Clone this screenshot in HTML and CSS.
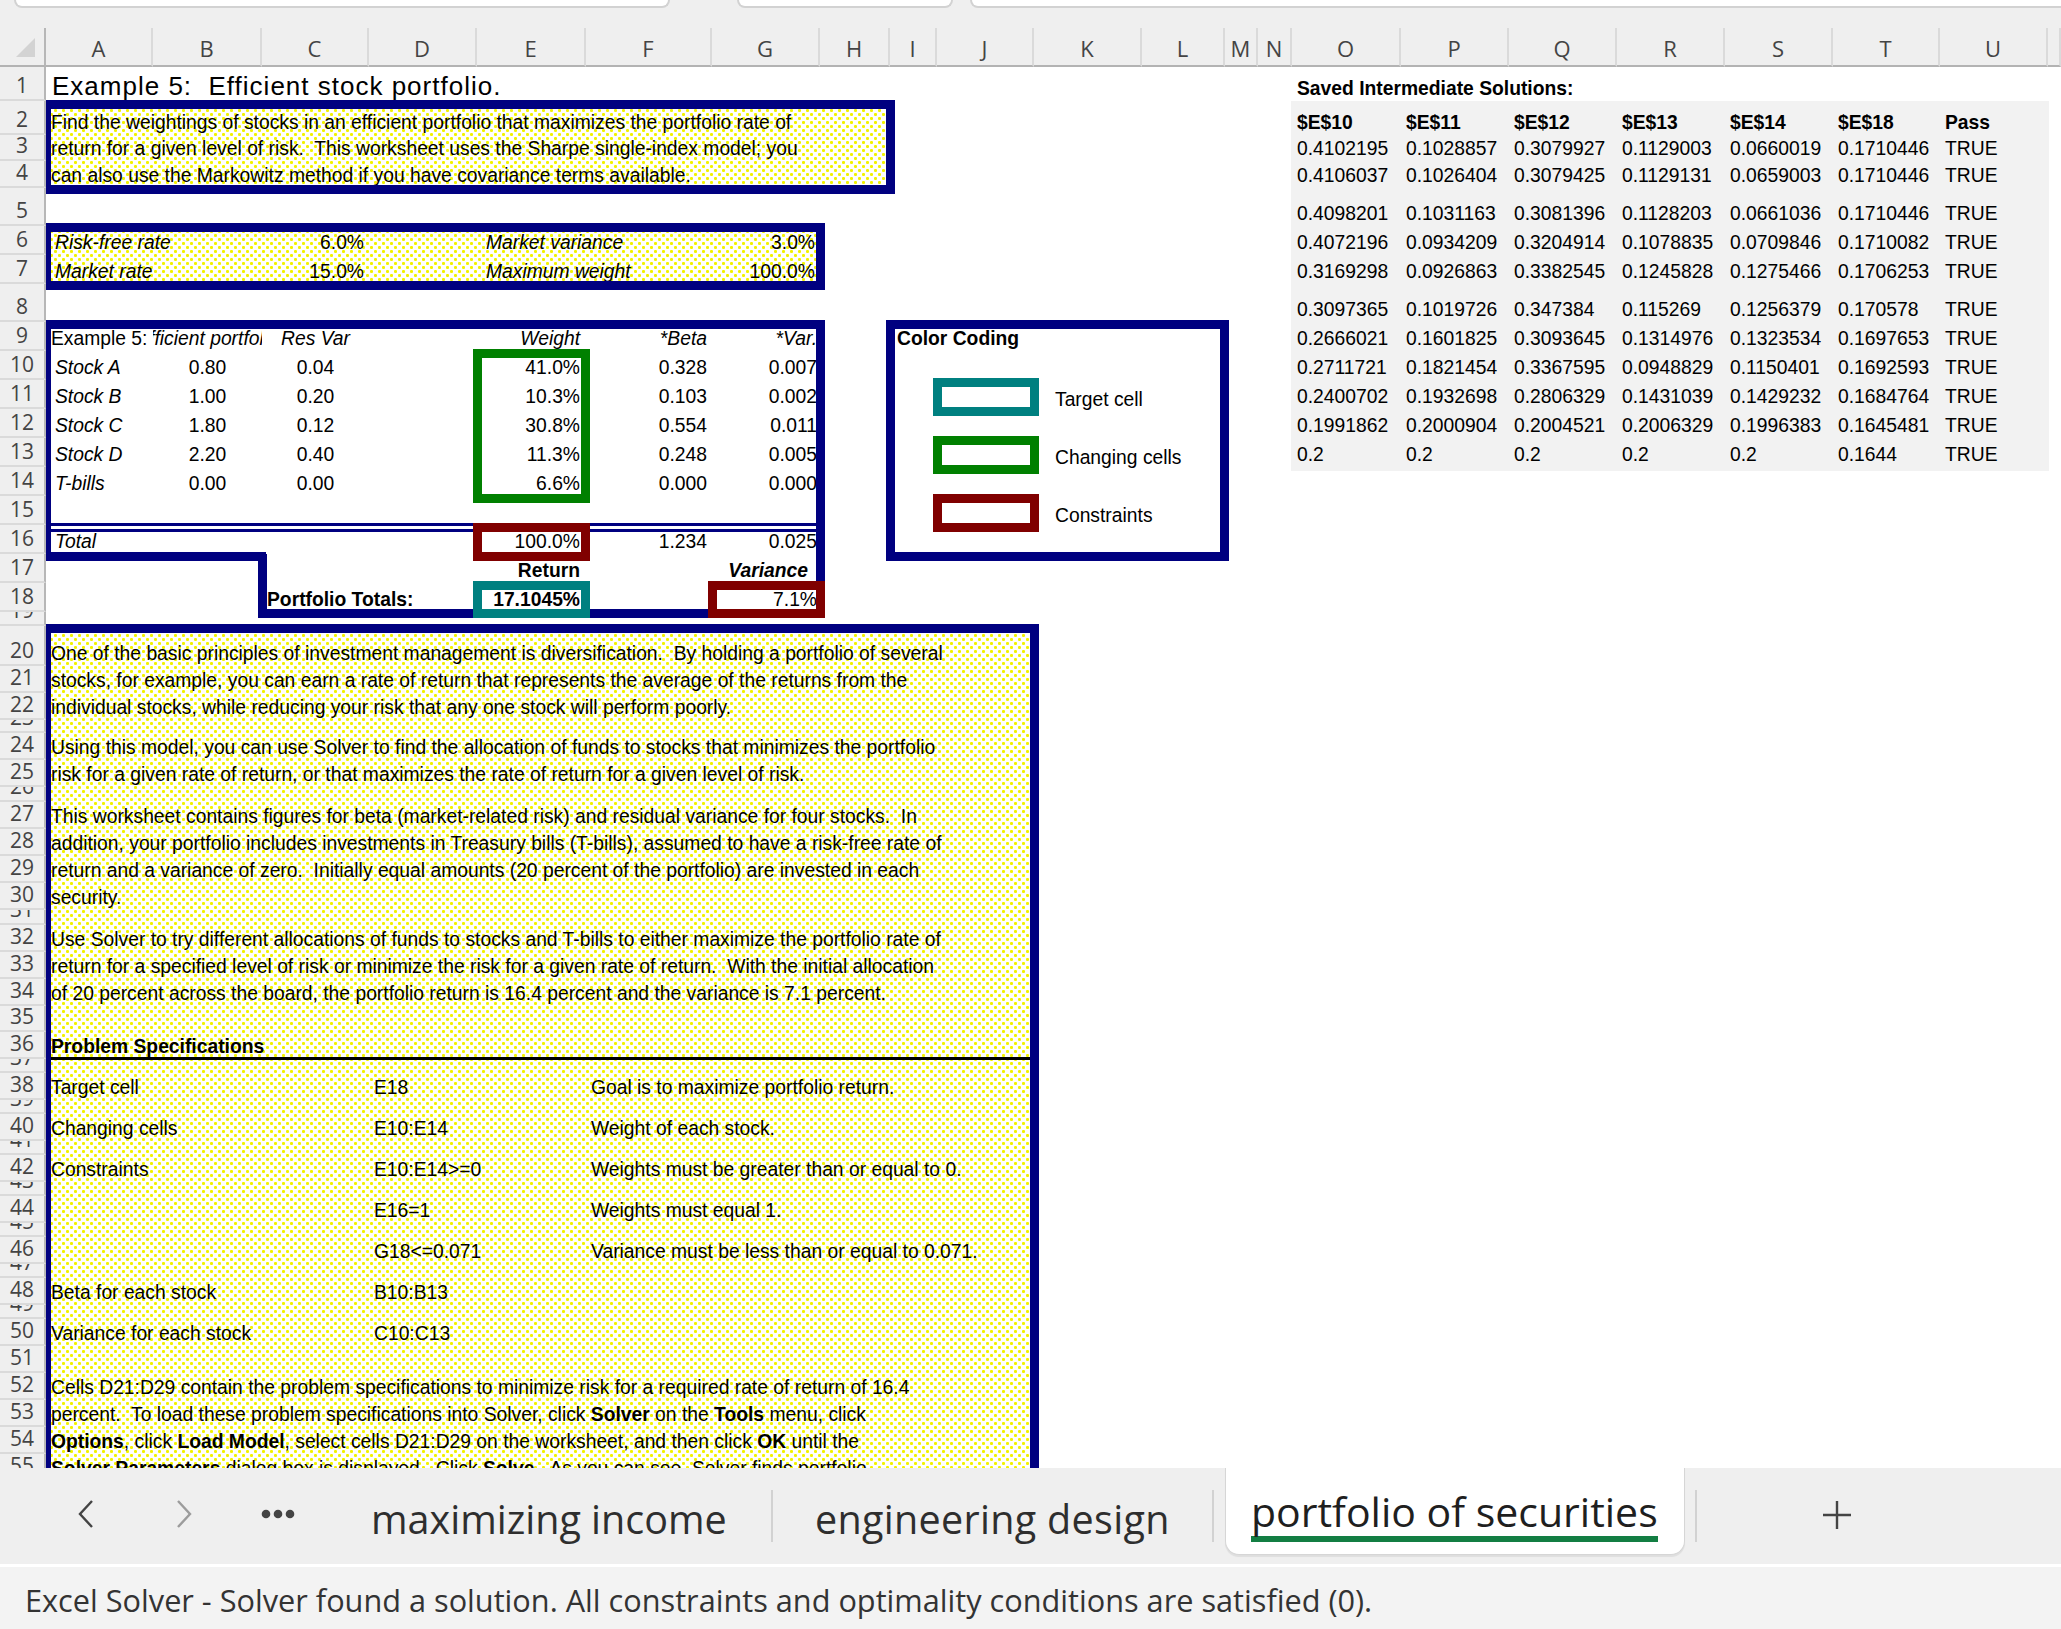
FILE: index.html
```html
<!DOCTYPE html>
<html lang="en">
<head>
<meta charset="utf-8">
<title>portfolio of securities</title>
<link rel="stylesheet" href="styles.css">
</head>
<body>
<div class="sheet">
  <!-- header row -->
  <div class="hdrbg"></div>
  <div class="ribbon"><span class="rb rb1"></span><span class="rb rb2"></span><span class="rb rb3"></span></div>
  <div class="corner"><svg width="19" height="19" viewBox="0 0 19 19"><path d="M19 0V19H0Z" fill="#d3d3d3"/></svg></div>
  <div class="ch cA">A</div><div class="ch cB">B</div><div class="ch cC">C</div><div class="ch cD">D</div>
  <div class="ch cE">E</div><div class="ch cF">F</div><div class="ch cG">G</div><div class="ch cH">H</div>
  <div class="ch cI">I</div><div class="ch cJ">J</div><div class="ch cK">K</div><div class="ch cL">L</div>
  <div class="ch cM">M</div><div class="ch cN">N</div><div class="ch cO">O</div><div class="ch cP">P</div>
  <div class="ch cQ">Q</div><div class="ch cR">R</div><div class="ch cS">S</div><div class="ch cT">T</div>
  <div class="ch cU">U</div><div class="ch cV"></div>

  <!-- fills -->
  <div class="fill dots f1"></div>
  <div class="fill dots f2"></div>
  <div class="fill dots f4"></div>
  <div class="fill panel"></div>

  <!-- row 1 -->
  <div class="c r1 cA title">Example 5:  Efficient stock portfolio.</div>
  <div class="c r1 cO b">Saved Intermediate Solutions:</div>

  <!-- rows 2-4 -->
  <div class="c r2 cA">Find the weightings of stocks in an efficient portfolio that maximizes the portfolio rate of</div>
  <div class="c r3 cA">return for a given level of risk.  This worksheet uses the Sharpe single-index model; you</div>
  <div class="c r4 cA">can also use the Markowitz method if you have covariance terms available.</div>

  <!-- right panel -->
  <div class="c r2 cO b">$E$10</div><div class="c r2 cP b">$E$11</div><div class="c r2 cQ b">$E$12</div><div class="c r2 cR b">$E$13</div><div class="c r2 cS b">$E$14</div><div class="c r2 cT b">$E$18</div><div class="c r2 cU b">Pass</div>
  <div class="c r3 cO">0.4102195</div><div class="c r3 cP">0.1028857</div><div class="c r3 cQ">0.3079927</div><div class="c r3 cR">0.1129003</div><div class="c r3 cS">0.0660019</div><div class="c r3 cT">0.1710446</div><div class="c r3 cU">TRUE</div>
  <div class="c r4 cO">0.4106037</div><div class="c r4 cP">0.1026404</div><div class="c r4 cQ">0.3079425</div><div class="c r4 cR">0.1129131</div><div class="c r4 cS">0.0659003</div><div class="c r4 cT">0.1710446</div><div class="c r4 cU">TRUE</div>
  <div class="c r5 cO">0.4098201</div><div class="c r5 cP">0.1031163</div><div class="c r5 cQ">0.3081396</div><div class="c r5 cR">0.1128203</div><div class="c r5 cS">0.0661036</div><div class="c r5 cT">0.1710446</div><div class="c r5 cU">TRUE</div>
  <div class="c r6 cO">0.4072196</div><div class="c r6 cP">0.0934209</div><div class="c r6 cQ">0.3204914</div><div class="c r6 cR">0.1078835</div><div class="c r6 cS">0.0709846</div><div class="c r6 cT">0.1710082</div><div class="c r6 cU">TRUE</div>
  <div class="c r7 cO">0.3169298</div><div class="c r7 cP">0.0926863</div><div class="c r7 cQ">0.3382545</div><div class="c r7 cR">0.1245828</div><div class="c r7 cS">0.1275466</div><div class="c r7 cT">0.1706253</div><div class="c r7 cU">TRUE</div>
  <div class="c r8 cO">0.3097365</div><div class="c r8 cP">0.1019726</div><div class="c r8 cQ">0.347384</div><div class="c r8 cR">0.115269</div><div class="c r8 cS">0.1256379</div><div class="c r8 cT">0.170578</div><div class="c r8 cU">TRUE</div>
  <div class="c r9 cO">0.2666021</div><div class="c r9 cP">0.1601825</div><div class="c r9 cQ">0.3093645</div><div class="c r9 cR">0.1314976</div><div class="c r9 cS">0.1323534</div><div class="c r9 cT">0.1697653</div><div class="c r9 cU">TRUE</div>
  <div class="c r10 cO">0.2711721</div><div class="c r10 cP">0.1821454</div><div class="c r10 cQ">0.3367595</div><div class="c r10 cR">0.0948829</div><div class="c r10 cS">0.1150401</div><div class="c r10 cT">0.1692593</div><div class="c r10 cU">TRUE</div>
  <div class="c r11 cO">0.2400702</div><div class="c r11 cP">0.1932698</div><div class="c r11 cQ">0.2806329</div><div class="c r11 cR">0.1431039</div><div class="c r11 cS">0.1429232</div><div class="c r11 cT">0.1684764</div><div class="c r11 cU">TRUE</div>
  <div class="c r12 cO">0.1991862</div><div class="c r12 cP">0.2000904</div><div class="c r12 cQ">0.2004521</div><div class="c r12 cR">0.2006329</div><div class="c r12 cS">0.1996383</div><div class="c r12 cT">0.1645481</div><div class="c r12 cU">TRUE</div>
  <div class="c r13 cO">0.2</div><div class="c r13 cP">0.2</div><div class="c r13 cQ">0.2</div><div class="c r13 cR">0.2</div><div class="c r13 cS">0.2</div><div class="c r13 cT">0.1644</div><div class="c r13 cU">TRUE</div>

  <!-- rows 6-7 -->
  <div class="c r6 cA i ind">Risk-free rate</div><div class="c r6 cC rt">6.0%</div>
  <div class="c r6 cE i ind">Market variance</div><div class="c r6 cG rt">3.0%</div>
  <div class="c r7 cA i ind">Market rate</div><div class="c r7 cC rt">15.0%</div>
  <div class="c r7 cE i ind">Maximum weight</div><div class="c r7 cG rt">100.0%</div>

  <!-- rows 9-18 -->
  <div class="c r9 cA clip">Example 5: Efficient portfolio</div>
  <div class="c r9 cB i ct clip">Efficient portfolio</div>
  <div class="c r9 cC i ct">Res Var</div>
  <div class="c r9 cE i rt pe">Weight</div>
  <div class="c r9 cF i rt">*Beta</div>
  <div class="c r9 cG i rt pg">*Var.</div>

  <div class="c r10 cA i ind">Stock A</div><div class="c r10 cB ct">0.80</div><div class="c r10 cC ct">0.04</div><div class="c r10 cE rt pe">41.0%</div><div class="c r10 cF rt">0.328</div><div class="c r10 cG rt pg">0.007</div>
  <div class="c r11 cA i ind">Stock B</div><div class="c r11 cB ct">1.00</div><div class="c r11 cC ct">0.20</div><div class="c r11 cE rt pe">10.3%</div><div class="c r11 cF rt">0.103</div><div class="c r11 cG rt pg">0.002</div>
  <div class="c r12 cA i ind">Stock C</div><div class="c r12 cB ct">1.80</div><div class="c r12 cC ct">0.12</div><div class="c r12 cE rt pe">30.8%</div><div class="c r12 cF rt">0.554</div><div class="c r12 cG rt pg">0.011</div>
  <div class="c r13 cA i ind">Stock D</div><div class="c r13 cB ct">2.20</div><div class="c r13 cC ct">0.40</div><div class="c r13 cE rt pe">11.3%</div><div class="c r13 cF rt">0.248</div><div class="c r13 cG rt pg">0.005</div>
  <div class="c r14 cA i ind">T-bills</div><div class="c r14 cB ct">0.00</div><div class="c r14 cC ct">0.00</div><div class="c r14 cE rt pe">6.6%</div><div class="c r14 cF rt">0.000</div><div class="c r14 cG rt pg">0.000</div>

  <div class="c r16 cA i ind">Total</div><div class="c r16 cE rt pe">100.0%</div><div class="c r16 cF rt">1.234</div><div class="c r16 cG rt pg">0.025</div>
  <div class="c r17 cE rt b pe">Return</div><div class="c r17 cG rt b i pv">Variance</div>
  <div class="c r18 cC b">Portfolio Totals:</div><div class="c r18 cE rt b pe">17.1045%</div><div class="c r18 cG rt pg">7.1%</div>

  <!-- colour coding -->
  <div class="c r9 cI b cc">Color Coding</div>
  <div class="c r11 cK lg">Target cell</div>
  <div class="c r13 cK lg">Changing cells</div>
  <div class="c r15 cK lg">Constraints</div>

  <!-- big text box -->
  <div class="c r20 cA">One of the basic principles of investment management is diversification.  By holding a portfolio of several</div>
  <div class="c r21 cA">stocks, for example, you can earn a rate of return that represents the average of the returns from the</div>
  <div class="c r22 cA">individual stocks, while reducing your risk that any one stock will perform poorly.</div>
  <div class="c r24 cA">Using this model, you can use Solver to find the allocation of funds to stocks that minimizes the portfolio</div>
  <div class="c r25 cA">risk for a given rate of return, or that maximizes the rate of return for a given level of risk.</div>
  <div class="c r27 cA">This worksheet contains figures for beta (market-related risk) and residual variance for four stocks.  In</div>
  <div class="c r28 cA">addition, your portfolio includes investments in Treasury bills (T-bills), assumed to have a risk-free rate of</div>
  <div class="c r29 cA">return and a variance of zero.  Initially equal amounts (20 percent of the portfolio) are invested in each</div>
  <div class="c r30 cA">security.</div>
  <div class="c r32 cA">Use Solver to try different allocations of funds to stocks and T-bills to either maximize the portfolio rate of</div>
  <div class="c r33 cA">return for a specified level of risk or minimize the risk for a given rate of return.  With the initial allocation</div>
  <div class="c r34 cA">of 20 percent across the board, the portfolio return is 16.4 percent and the variance is 7.1 percent.</div>
  <div class="c r36 cA b">Problem Specifications</div>

  <div class="c r38 cA">Target cell</div><div class="c r38 cD">E18</div><div class="c r38 cF">Goal is to maximize portfolio return.</div>
  <div class="c r40 cA">Changing cells</div><div class="c r40 cD">E10:E14</div><div class="c r40 cF">Weight of each stock.</div>
  <div class="c r42 cA">Constraints</div><div class="c r42 cD">E10:E14&gt;=0</div><div class="c r42 cF">Weights must be greater than or equal to 0.</div>
  <div class="c r44 cD">E16=1</div><div class="c r44 cF">Weights must equal 1.</div>
  <div class="c r46 cD">G18&lt;=0.071</div><div class="c r46 cF">Variance must be less than or equal to 0.071.</div>
  <div class="c r48 cA">Beta for each stock</div><div class="c r48 cD">B10:B13</div>
  <div class="c r50 cA">Variance for each stock</div><div class="c r50 cD">C10:C13</div>

  <div class="c r52 cA">Cells D21:D29 contain the problem specifications to minimize risk for a required rate of return of 16.4</div>
  <div class="c r53 cA"><span>percent.  To load these problem specifications into Solver, click <b>Solver</b> on the <b>Tools</b> menu, click</span></div>
  <div class="c r54 cA"><span><b>Options</b>, click <b>Load Model</b>, select cells D21:D29 on the worksheet, and then click <b>OK</b> until the</span></div>
  <div class="c r55 cA"><span><b>Solver Parameters</b> dialog box is displayed.  Click <b>Solve</b>.  As you can see, Solver finds portfolio</span></div>

  <!-- frames -->
  <div class="fr fr1"></div>
  <div class="fr fr2"></div>
  <div class="fr fr3a"></div>
  <div class="fr fr3b"></div>
  <div class="fr fr3c"></div>
  <div class="dbl"></div>
  <div class="hr36"></div>
  <div class="fr fr4"></div>
  <div class="fr frcc"></div>
  <div class="fr frg"></div>
  <div class="fr frr1"></div>
  <div class="fr frt"></div>
  <div class="fr frr2"></div>
  <div class="fr sw sw1"></div>
  <div class="fr sw sw2"></div>
  <div class="fr sw sw3"></div>

  <!-- row numbers -->
  <div class="rn r1">1</div><div class="rn r2">2</div><div class="rn r3">3</div><div class="rn r4">4</div><div class="rn r5">5</div>
  <div class="rn r6">6</div><div class="rn r7">7</div><div class="rn r8">8</div><div class="rn r9">9</div><div class="rn r10">10</div>
  <div class="rn r11">11</div><div class="rn r12">12</div><div class="rn r13">13</div><div class="rn r14">14</div><div class="rn r15">15</div>
  <div class="rn r16">16</div><div class="rn r17">17</div><div class="rn r18">18</div><div class="rn r19">19</div><div class="rn r20">20</div>
  <div class="rn r21">21</div><div class="rn r22">22</div><div class="rn r23">23</div><div class="rn r24">24</div><div class="rn r25">25</div>
  <div class="rn r26">26</div><div class="rn r27">27</div><div class="rn r28">28</div><div class="rn r29">29</div><div class="rn r30">30</div>
  <div class="rn r31">31</div><div class="rn r32">32</div><div class="rn r33">33</div><div class="rn r34">34</div><div class="rn r35">35</div>
  <div class="rn r36">36</div><div class="rn r37">37</div><div class="rn r38">38</div><div class="rn r39">39</div><div class="rn r40">40</div>
  <div class="rn r41">41</div><div class="rn r42">42</div><div class="rn r43">43</div><div class="rn r44">44</div><div class="rn r45">45</div>
  <div class="rn r46">46</div><div class="rn r47">47</div><div class="rn r48">48</div><div class="rn r49">49</div><div class="rn r50">50</div>
  <div class="rn r51">51</div><div class="rn r52">52</div><div class="rn r53">53</div><div class="rn r54">54</div><div class="rn r55">55</div>
</div>

<div class="tabbar">
  <div class="nav">
    <svg class="chev" width="16" height="28" viewBox="0 0 16 28"><path d="M14 1L2 14L14 27" fill="none" stroke="#444" stroke-width="2.4"/></svg>
    <svg class="chev next" width="16" height="28" viewBox="0 0 16 28"><path d="M2 1L14 14L2 27" fill="none" stroke="#9c9c9c" stroke-width="2.4"/></svg>
    <svg width="34" height="10" viewBox="0 0 34 10"><circle cx="5" cy="5" r="4.3" fill="#444"/><circle cx="17" cy="5" r="4.3" fill="#444"/><circle cx="29" cy="5" r="4.3" fill="#444"/></svg>
  </div>
  <div class="tab t1">maximizing income</div>
  <div class="sep"></div>
  <div class="tab t2">engineering design</div>
  <div class="sep"></div>
  <div class="tab active"><span class="uline">portfolio of securities</span></div>
  <div class="sep s3"></div>
  <div class="plus"><svg width="32" height="32" viewBox="0 0 32 32"><path d="M16 2V30M2 16H30" stroke="#444" stroke-width="2.4"/></svg></div>
</div>
<div class="status">Excel Solver - Solver found a solution. All constraints and optimality conditions are satisfied (0).</div>
</body>
</html>
```
FILE: styles.css
```css
* { box-sizing: border-box; }
html, body { margin: 0; padding: 0; }
body {
  width: 2061px;
  height: 1629px;
  overflow: hidden;
  background: #fff;
  font-family: "Liberation Sans", Arial, sans-serif;
  color: #000;
}

/* ---------- sheet grid ---------- */
.sheet {
  display: grid;
  height: 1468px;
  overflow: hidden;
  grid-template-columns: 46px 107px 109px 107px 108px 109px 126px 108px 70px 47px 97px 108px 83px 33px 34px 109px 108px 108px 108px 108px 107px 108px 13px;
  grid-template-rows:
    67px
    34px 34px 26px 27px 38px 29px 29px 38px
    29px 29px 29px 29px 29px 29px 29px 29px 29px 29px
    14px 40px 27px 27px 13px 27px 27px 15px
    27px 27px 27px 27px 15px
    27px 27px 27px 26px 27px
    14px
    27px 14px 27px 14px 27px 14px 27px 14px 27px 14px 27px 14px
    27px 27px 27px 27px 27px 27px;
}

/* rows: rN -> grid row N+1 */
.r1{grid-row:2}.r2{grid-row:3}.r3{grid-row:4}.r4{grid-row:5}.r5{grid-row:6}
.r6{grid-row:7}.r7{grid-row:8}.r8{grid-row:9}.r9{grid-row:10}.r10{grid-row:11}
.r11{grid-row:12}.r12{grid-row:13}.r13{grid-row:14}.r14{grid-row:15}.r15{grid-row:16}
.r16{grid-row:17}.r17{grid-row:18}.r18{grid-row:19}.r19{grid-row:20}.r20{grid-row:21}
.r21{grid-row:22}.r22{grid-row:23}.r23{grid-row:24}.r24{grid-row:25}.r25{grid-row:26}
.r26{grid-row:27}.r27{grid-row:28}.r28{grid-row:29}.r29{grid-row:30}.r30{grid-row:31}
.r31{grid-row:32}.r32{grid-row:33}.r33{grid-row:34}.r34{grid-row:35}.r35{grid-row:36}
.r36{grid-row:37}.r37{grid-row:38}.r38{grid-row:39}.r39{grid-row:40}.r40{grid-row:41}
.r41{grid-row:42}.r42{grid-row:43}.r43{grid-row:44}.r44{grid-row:45}.r45{grid-row:46}
.r46{grid-row:47}.r47{grid-row:48}.r48{grid-row:49}.r49{grid-row:50}.r50{grid-row:51}
.r51{grid-row:52}.r52{grid-row:53}.r53{grid-row:54}.r54{grid-row:55}.r55{grid-row:56}

/* columns */
.cA{grid-column:2}.cB{grid-column:3}.cC{grid-column:4}.cD{grid-column:5}
.cE{grid-column:6}.cF{grid-column:7}.cG{grid-column:8}.cH{grid-column:9}
.cI{grid-column:10}.cJ{grid-column:11}.cK{grid-column:12}.cL{grid-column:13}
.cM{grid-column:14}.cN{grid-column:15}.cO{grid-column:16}.cP{grid-column:17}
.cQ{grid-column:18}.cR{grid-column:19}.cS{grid-column:20}.cT{grid-column:21}
.cU{grid-column:22}.cV{grid-column:23}

/* ---------- header ---------- */
.hdrbg {
  grid-row: 1;
  grid-column: 1 / -1;
  background: #efefef;
}
.ribbon {
  grid-row: 1;
  grid-column: 1 / -1;
  align-self: start;
  height: 8px;
  display: flex;
  z-index: 1;
}
.rb {
  display: block;
  height: 8px;
  background: #fff;
  border: 2px solid #d2d2d2;
  border-top: 0;
  border-radius: 0 0 11px 11px;
}
.rb1 { margin-left: 14px; width: 656px; }
.rb2 { margin-left: 67px; width: 216px; }
.rb3 { margin-left: 17px; flex: 1; margin-right: -30px; }

.corner {
  grid-row: 1;
  grid-column: 1;
  align-self: end;
  height: 39px;
  border-right: 2px solid #b7b7b7;
  border-bottom: 2px solid #b3b3b3;
  display: flex;
  align-items: flex-end;
  justify-content: flex-end;
  padding: 0 9px 8px 0;
  z-index: 6;
}
.ch {
  grid-row: 1;
  align-self: end;
  height: 39px;
  padding-top: 3px;
  border-bottom: 2px solid #b3b3b3;
  border-right: 2px solid #dadada;
  font-family: "Open Sans", "Noto Sans", sans-serif;
  font-size: 22px;
  line-height: 34px;
  color: #444;
  text-align: center;
  z-index: 1;
}

/* ---------- row numbers ---------- */
.rn {
  grid-column: 1;
  background: #efefef;
  border-right: 2px solid #b7b7b7;
  border-bottom: 2px solid #dadada;
  display: flex;
  align-items: flex-end;
  justify-content: center;
  font-family: "Open Sans", "Noto Sans", sans-serif;
  font-size: 21px;
  line-height: 27px;
  color: #444;
  overflow: hidden;
  z-index: 6;
}

/* ---------- fills ---------- */
.fill { z-index: 0; }
.dots {
  background-color: #fff;
  background-image:
    radial-gradient(circle at 1.5px 1.5px, #f2f200 1.3px, transparent 1.7px),
    radial-gradient(circle at 1.5px 1.5px, #f2f200 1.3px, transparent 1.7px);
  background-size: 8px 8px, 8px 8px;
  background-position: 0 0, 4px 4px;
}
.f1 { grid-row: 3 / 6; grid-column: 2 / 10; }
.f2 { grid-row: 7 / 9; grid-column: 2 / 9; }
.f4 { grid-row: 21 / 57; grid-column: 2 / 12; }
.panel {
  grid-row: 3 / 15;
  grid-column: 16 / 23;
  background: #f2f2f2;
  margin: 0 -1px -4px -1px;
}

/* ---------- cells ---------- */
.c {
  display: flex;
  align-items: flex-end;
  white-space: pre;
  font-size: 19.3px;
  line-height: 20px;
  padding: 0 5px 2px 5px;
  min-width: 0;
  z-index: 1;
}
.c b { font-weight: bold; }
.i { font-style: italic; }
.b { font-weight: bold; }
.rt { justify-content: flex-end; }
.ct { justify-content: center; }
.clip { overflow: hidden; }
.ind { padding-left: 9px; }
.pe { padding-right: 6px; }
.pg { padding-right: 3px; }
.pv { padding-right: 12px; }
.title {
  font-size: 26px;
  letter-spacing: 1px;
  line-height: 28px;
  padding-bottom: 1px;
  padding-left: 6px;
}
.cc { padding-left: 7px; }
.lg { padding-left: 21px; margin-bottom: -3px; }

/* ---------- frames ---------- */
.fr {
  border: 9px solid #000080;
  margin: -2px -5px -7px -4px;
  z-index: 3;
}
.fr1 { grid-row: 3 / 6; grid-column: 2 / 10; margin-top: -1px; margin-bottom: -6px; }
.fr2 { grid-row: 7 / 9; grid-column: 2 / 9; margin-top: -3px; margin-bottom: -6px; }
.fr3a { grid-row: 10 / 18; grid-column: 2 / 9; border-bottom: 0; margin-bottom: 0; }
.fr3b { grid-row: 17; grid-column: 2 / 4; border-width: 0 0 9px 0; margin: 0 -4px -7px -4px; }
.fr3c { grid-row: 18 / 20; grid-column: 4 / 9; border-top: 0; margin-top: 0; margin-bottom: -6px; }
.fr4 { grid-row: 21 / 57; grid-column: 2 / 12; }
.frcc { grid-row: 10 / 18; grid-column: 10 / 14; margin-right: -4px; }
.frg { grid-row: 11 / 16; grid-column: 6; border-color: #008000; margin-right: -4px; }
.frr1 { grid-row: 17; grid-column: 6; border-color: #800000; margin-right: -4px; }
.frt { grid-row: 19; grid-column: 6; border-color: #008080; margin-right: -4px; margin-bottom: -6px; }
.frr2 { grid-row: 19; grid-column: 8; border-color: #800000; margin-bottom: -6px; }
.sw { grid-column: 11; }
.sw1 { grid-row: 12; border-color: #008080; }
.sw2 { grid-row: 14; border-color: #008000; }
.sw3 { grid-row: 16; border-color: #800000; }

.dbl {
  grid-row: 16;
  grid-column: 2 / 9;
  border-bottom: 9px double #000080;
  margin: 0 0 -7px -4px;
  z-index: 2;
}
.hr36 {
  grid-row: 37;
  grid-column: 2 / 12;
  border-bottom: 3px solid #000;
  margin-bottom: -1px;
  z-index: 2;
}

/* ---------- sheet tabs ---------- */
.tabbar {
  height: 96px;
  background: #efefef;
  display: flex;
  align-items: flex-start;
  font-family: "Open Sans", "Noto Sans", sans-serif;
  color: #2e2e2e;
}
.nav {
  width: 371px;
  height: 92px;
  display: flex;
  align-items: center;
  padding-left: 78px;
}
.chev { margin-right: 82px; }
.chev.next { margin-right: 69px; }
.tab {
  font-size: 39.5px;
  line-height: 52px;
  padding-top: 25px;
  white-space: nowrap;
}
.t1 { width: 400px; }
.t2 { width: 439px; padding-left: 42px; letter-spacing: 0.3px; }
.sep {
  width: 2px;
  height: 52px;
  margin-top: 22px;
  background: #d2d2d2;
}
.active {
  width: 460px;
  height: 87px;
  margin-left: 11px;
  margin-right: 10px;
  padding-top: 17px;
  padding-left: 25px;
  background: #fff;
  border: 1px solid #d6d6d6;
  border-top: 0;
  border-radius: 0 0 14px 14px;
  box-shadow: 0 2px 1px rgba(0,0,0,0.07);
  color: #1f1f1f;
  font-size: 41px;
}
.uline {
  display: inline-block;
  border-bottom: 6px solid #137e43;
  line-height: 50px;
}
.plus {
  margin-left: 124px;
  margin-top: 31px;
  height: 32px;
}
.status {
  height: 65px;
  border-top: 3px solid #fff;
  background: #f3f3f3;
  padding: 12px 0 0 25px;
  font-family: "Open Sans", "Noto Sans", sans-serif;
  font-size: 30.7px;
  line-height: 42px;
  color: #333;
  white-space: nowrap;
}
```
